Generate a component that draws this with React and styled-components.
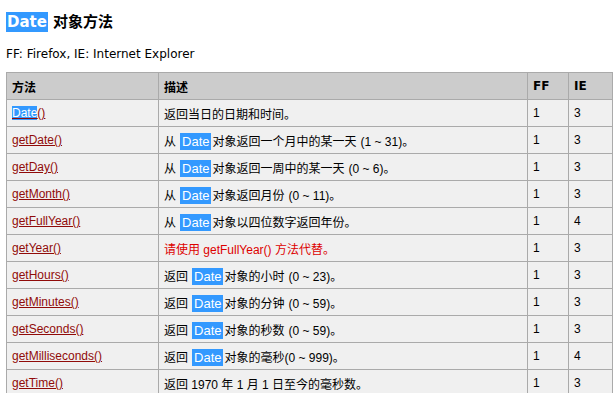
import React from 'react';
import styled, { createGlobalStyle } from 'styled-components';

const GlobalStyle = createGlobalStyle`
  body {
    margin: 0;
    padding: 0 6px;
    background: #ffffff;
    color: #000000;
    font-family: "Liberation Sans", "Noto Sans CJK SC", sans-serif;
  }
`;

const Page = styled.div`
  display: flex;
  flex-direction: column;
  padding-top: 12px;
`;

const Title = styled.h2`
  margin: 0;
  font-family: "DejaVu Sans", "Noto Sans CJK SC", sans-serif;
  font-size: 15px;
  line-height: 20px;
  font-weight: bold;
  display: flex;
  align-items: center;
  gap: 5px;
`;

const Mark = styled.span`
  background: #3399ff;
  color: #ffffff;
  padding: ${({ $pad }) => $pad || '0 1px'};
  margin: ${({ $gap }) => ($gap ? '0 1px 0 4px' : '0')};
  font-size: ${({ $big }) => ($big ? '13px' : 'inherit')};
`;

const Note = styled.p`
  margin: 14px 0 10px;
  font-family: "DejaVu Sans", sans-serif;
  font-size: 12px;
  line-height: 16px;
`;

const Table = styled.table`
  width: 607px;
  border-collapse: collapse;
  border: 1px solid #9a9a9a;
  font-size: 12px;
`;

const Th = styled.th`
  background: #cccccc;
  border: 1px solid #aaaaaa;
  height: 26px;
  padding: 0 5px;
  text-align: left;
  font-family: "DejaVu Sans", "Noto Sans CJK SC", sans-serif;
  font-size: 12px;
  font-weight: bold;
  width: ${({ $w }) => $w};
`;

const Td = styled.td`
  background: #f0f0f0;
  border: 1px solid #aaaaaa;
  height: 26px;
  padding: 0 5px;
  color: ${({ $warn }) => ($warn ? '#dd0000' : '#000000')};
`;

const Range = styled.span`
  margin-left: 4px;
`;

const Link = styled.a`
  color: #900b09;
  text-decoration: underline;
`;

const rows = [
  { name: 'Date()', desc: ['', '返回当日的日期和时间。'], ff: 1, ie: 3, first: true },
  { name: 'getDate()', desc: ['从', '对象返回一个月中的某一天', '(1 ~ 31)。'], ff: 1, ie: 3 },
  { name: 'getDay()', desc: ['从', '对象返回一周中的某一天', '(0 ~ 6)。'], ff: 1, ie: 3 },
  { name: 'getMonth()', desc: ['从', '对象返回月份', '(0 ~ 11)。'], ff: 1, ie: 3 },
  { name: 'getFullYear()', desc: ['从', '对象以四位数字返回年份。'], ff: 1, ie: 4 },
  { name: 'getYear()', desc: ['', '请使用 getFullYear() 方法代替。'], ff: 1, ie: 3, warn: true },
  { name: 'getHours()', desc: ['返回', '对象的小时', '(0 ~ 23)。'], ff: 1, ie: 3 },
  { name: 'getMinutes()', desc: ['返回', '对象的分钟', '(0 ~ 59)。'], ff: 1, ie: 3 },
  { name: 'getSeconds()', desc: ['返回', '对象的秒数', '(0 ~ 59)。'], ff: 1, ie: 3 },
  { name: 'getMilliseconds()', desc: ['返回', '对象的毫秒(0 ~ 999)。'], ff: 1, ie: 4 },
  { name: 'getTime()', desc: ['', '返回 1970 年 1 月 1 日至今的毫秒数。'], ff: 1, ie: 3 },
];

const App = () => {
  return (
    <Page>
      <GlobalStyle />
      <Title>
        <Mark $pad="0 1px">Date</Mark>
        对象方法
      </Title>
      <Note>FF: Firefox, IE: Internet Explorer</Note>
      <Table>
        <thead>
          <tr>
            <Th $w="141px">方法</Th>
            <Th $w="358px">描述</Th>
            <Th $w="30px">FF</Th>
            <Th>IE</Th>
          </tr>
        </thead>
        <tbody>
          {rows.map((row) => (
            <tr key={row.name}>
              <Td>
                {row.first ? (
                  <Link href="#">
                    <Mark $pad="0">Date</Mark>()
                  </Link>
                ) : (
                  <Link href="#">{row.name}</Link>
                )}
              </Td>
              <Td $warn={row.warn}>
                {row.desc[0] ? (
                  <>
                    {row.desc[0]}
                    <Mark $pad="1px 2px" $gap $big>Date</Mark>
                    {row.desc[1]}
                    {row.desc[2] && <Range>{row.desc[2]}</Range>}
                  </>
                ) : (
                  row.desc[1]
                )}
              </Td>
              <Td>{row.ff}</Td>
              <Td>{row.ie}</Td>
            </tr>
          ))}
        </tbody>
      </Table>
    </Page>
  );
};

export default App;
